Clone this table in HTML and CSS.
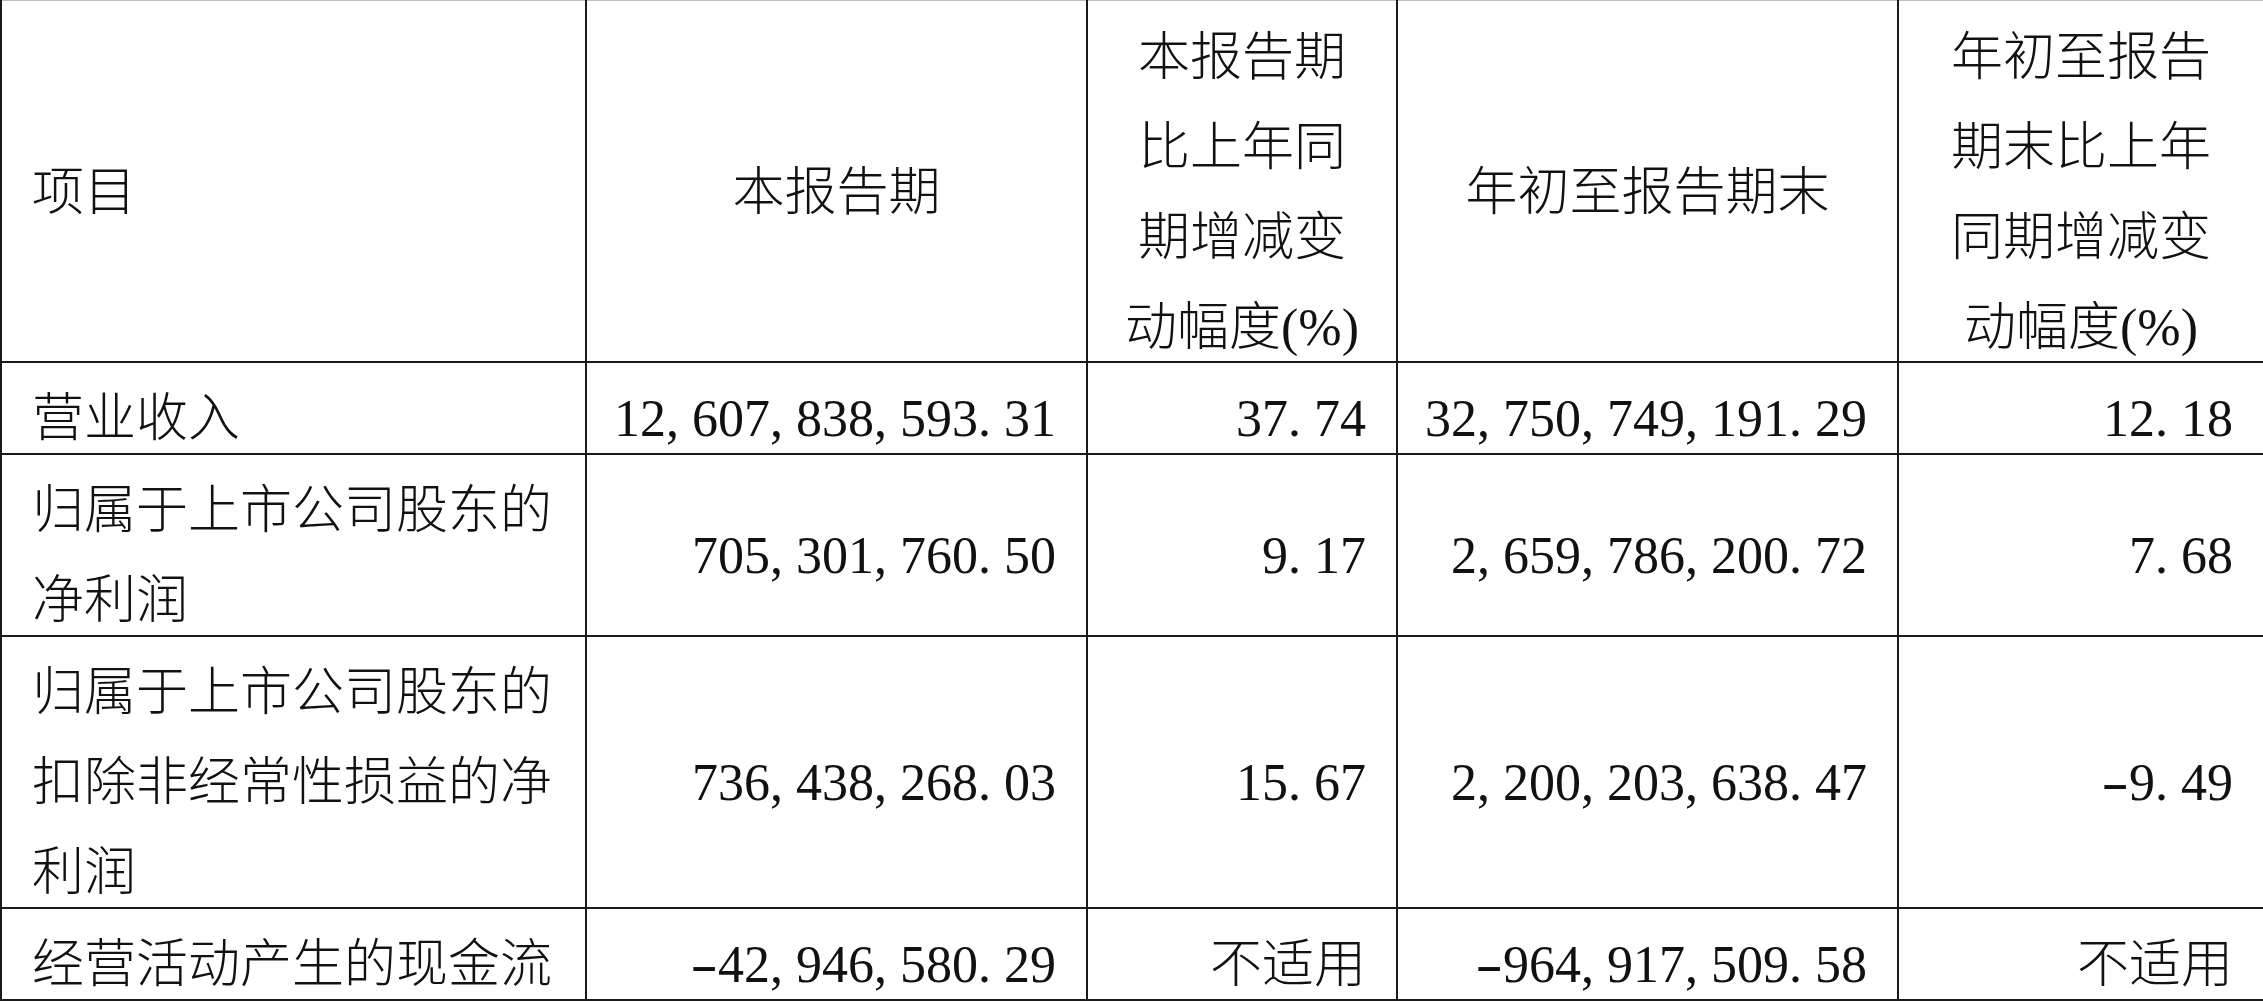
FILE: index.html
```html
<!DOCTYPE html>
<html lang="zh-CN">
<head>
<meta charset="utf-8">
<title>主要会计数据</title>
<link rel="stylesheet" href="styles.css">
</head>
<body>
<table class="report">
  <colgroup>
    <col class="col-item">
    <col class="col-amount">
    <col class="col-pct">
    <col class="col-amount">
    <col class="col-pct-wide">
  </colgroup>
  <thead>
    <tr>
      <th class="label"><div class="in">项目</div></th>
      <th class="center"><div class="in">本报告期</div></th>
      <th class="center"><div class="in">本报告期<br>比上年同<br>期增减变<br>动幅度(%)</div></th>
      <th class="center"><div class="in">年初至报告期末</div></th>
      <th class="center"><div class="in">年初至报告<br>期末比上年<br>同期增减变<br>动幅度(%)</div></th>
    </tr>
  </thead>
  <tbody>
    <tr>
      <td class="label"><div class="in">营业收入</div></td>
      <td class="num"><div class="in">12<span class="p">,</span>607<span class="p">,</span>838<span class="p">,</span>593<span class="p">.</span>31</div></td>
      <td class="num"><div class="in">37<span class="p">.</span>74</div></td>
      <td class="num"><div class="in">32<span class="p">,</span>750<span class="p">,</span>749<span class="p">,</span>191<span class="p">.</span>29</div></td>
      <td class="num"><div class="in">12<span class="p">.</span>18</div></td>
    </tr>
    <tr>
      <td class="label"><div class="in">归属于上市公司股东的<br>净利润</div></td>
      <td class="num"><div class="in">705<span class="p">,</span>301<span class="p">,</span>760<span class="p">.</span>50</div></td>
      <td class="num"><div class="in">9<span class="p">.</span>17</div></td>
      <td class="num"><div class="in">2<span class="p">,</span>659<span class="p">,</span>786<span class="p">,</span>200<span class="p">.</span>72</div></td>
      <td class="num"><div class="in">7<span class="p">.</span>68</div></td>
    </tr>
    <tr>
      <td class="label"><div class="in">归属于上市公司股东的<br>扣除非经常性损益的净<br>利润</div></td>
      <td class="num"><div class="in">736<span class="p">,</span>438<span class="p">,</span>268<span class="p">.</span>03</div></td>
      <td class="num"><div class="in">15<span class="p">.</span>67</div></td>
      <td class="num"><div class="in">2<span class="p">,</span>200<span class="p">,</span>203<span class="p">,</span>638<span class="p">.</span>47</div></td>
      <td class="num"><div class="in"><span class="minus">-</span>9<span class="p">.</span>49</div></td>
    </tr>
    <tr>
      <td class="label"><div class="in">经营活动产生的现金流</div></td>
      <td class="num"><div class="in"><span class="minus">-</span>42<span class="p">,</span>946<span class="p">,</span>580<span class="p">.</span>29</div></td>
      <td class="num"><div class="in">不适用</div></td>
      <td class="num"><div class="in"><span class="minus">-</span>964<span class="p">,</span>917<span class="p">,</span>509<span class="p">.</span>58</div></td>
      <td class="num"><div class="in">不适用</div></td>
    </tr>
  </tbody>
</table>
</body>
</html>
```

FILE: styles.css
```css
html, body {
  margin: 0;
  padding: 0;
  background: #ffffff;
}

.report {
  width: 2263px;
  table-layout: fixed;
  border-collapse: collapse;
  font-family: "Liberation Serif", "Noto Sans CJK SC", serif;
  font-size: 52px;
  font-weight: 300;
  line-height: 90px;
  color: #111111;
}

.col-item { width: 585px; }
.col-amount { width: 501px; }
.col-pct { width: 310px; }
.col-pct-wide { width: 366px; }

.report th,
.report td {
  border: 2px solid #1a1a1a;
  padding: 0;
  vertical-align: middle;
  font-weight: 300;
  white-space: nowrap;
}

.report thead th {
  border-top-width: 1px;
  border-top-color: #bdbdbd;
}

.in {
  margin: 11px 0 -11px;
}

.report thead .in {
  margin: 12px 0 -12px;
}

.report th.label,
.report td.label {
  text-align: left;
  padding-left: 30px;
}

.report th.center {
  text-align: center;
  padding: 0 20px;
}

.report td.num {
  text-align: right;
  padding-right: 30px;
}

.p {
  display: inline-block;
  width: 0.5em;
  text-align: left;
}

.minus {
  display: inline-block;
  width: 0.5em;
  text-align: right;
  transform: scaleX(1.6);
  transform-origin: right center;
}
```
